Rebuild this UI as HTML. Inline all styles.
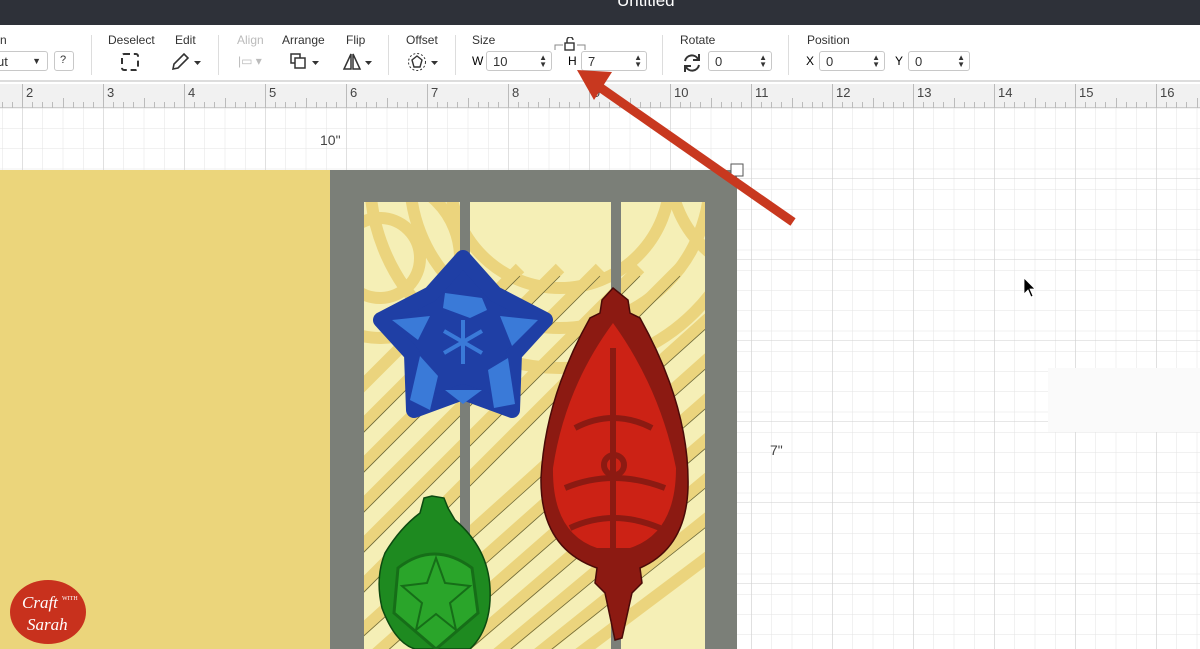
<!DOCTYPE html>
<html><head><meta charset="utf-8"><style>
*{margin:0;padding:0;box-sizing:border-box}
body{width:1200px;height:649px;overflow:hidden;position:relative;font-family:"Liberation Sans",sans-serif;background:#fff}
.abs{position:absolute}
.top{left:0;top:0;width:1200px;height:25px;background:#2e3139;color:#fff;font-size:17px}
.tb{left:0;top:25px;width:1200px;height:57px;background:#fff;border-bottom:2px solid #ddd}
.lbl{font-size:12px;color:#333;position:absolute;top:8px}
.inp{position:absolute;top:26px;height:20px;border:1px solid #c8c8c8;border-radius:3px;font-size:13px;color:#333;padding:2px 6px;background:#fff}
.sep{position:absolute;top:10px;width:1px;height:40px;background:#ddd}
.spin{position:absolute;right:4px;top:2px;font-size:8px;line-height:7px;color:#333}
.ruler{left:0;top:84px;width:1200px;height:24px;background:#f1f1f1;border-bottom:1px solid #ccc}
.rn{position:absolute;top:1px;font-size:13px;color:#444}
</style></head><body>
<div class="abs top"><span class="abs" style="left:617px;top:-9px">Untitled</span></div>
<div class="abs tb">
 <span class="lbl" style="left:0">n</span>
 <div class="inp" style="left:-10px;width:58px">ut<span style="position:absolute;right:6px;font-size:9px;top:4px">▼</span></div>
 <div class="inp" style="left:54px;width:20px;padding:2px 5px;font-size:11px">?</div>
 <div class="sep" style="left:91px"></div>
 <span class="lbl" style="left:108px">Deselect</span>
 <div class="abs" style="left:121px;top:28px;width:18px;height:18px;border:2px dashed #333;border-radius:3px"></div>
 <span class="lbl" style="left:175px">Edit</span>
 <svg class="abs" style="left:170px;top:27px" width="34" height="20"><path d="M3 17 L4 12 L14 2 L18 6 L8 16 Z" fill="none" stroke="#333" stroke-width="1.6"/><path d="M24 9h7l-3.5 4z" fill="#333"/></svg>
 <div class="sep" style="left:218px"></div>
 <span class="lbl" style="left:237px;color:#bbb">Align</span>
 <span class="abs" style="left:238px;top:29px;color:#bbb;font-size:12px">|▭ ▾</span>
 <span class="lbl" style="left:282px">Arrange</span>
 <svg class="abs" style="left:290px;top:28px" width="32" height="18"><rect x="1" y="1" width="9" height="9" fill="none" stroke="#333" stroke-width="1.5"/><rect x="5" y="5" width="10" height="10" fill="#fff" stroke="#333" stroke-width="1.5"/><path d="M22 8h7l-3.5 4z" fill="#333"/></svg>
 <span class="lbl" style="left:346px">Flip</span>
 <svg class="abs" style="left:342px;top:27px" width="32" height="20"><path d="M9 2 L2 17 H9 Z M11 2 L18 17 H11 Z" fill="none" stroke="#333" stroke-width="1.5"/><path d="M23 9h7l-3.5 4z" fill="#333"/></svg>
 <div class="sep" style="left:388px"></div>
 <span class="lbl" style="left:406px">Offset</span>
 <svg class="abs" style="left:407px;top:27px" width="34" height="20"><circle cx="10" cy="10" r="8.5" fill="none" stroke="#333" stroke-dasharray="2 2"/><path d="M10 4 L15 8 L13 15 H7 L5 8Z" fill="none" stroke="#333" stroke-width="1.4"/><path d="M24 9h7l-3.5 4z" fill="#333"/></svg>
 <div class="sep" style="left:455px"></div>
 <span class="lbl" style="left:472px">Size</span>
 <span class="abs" style="left:472px;top:29px;font-size:12px">W</span>
 <div class="inp" style="left:486px;width:66px">10<span class="spin">▲<br>▼</span></div>
 <svg class="abs" style="left:554px;top:12px" width="32" height="14"><path d="M1 13V8h8M31 13V8h-8" fill="none" stroke="#888"/><rect x="11" y="6" width="9" height="7" fill="none" stroke="#333" stroke-width="1.4"/><path d="M13 6V3a3 3 0 0 1 6 0" fill="none" stroke="#333" stroke-width="1.4"/></svg>
 <span class="abs" style="left:568px;top:29px;font-size:12px">H</span>
 <div class="inp" style="left:581px;width:66px">7<span class="spin">▲<br>▼</span></div>
 <div class="sep" style="left:662px"></div>
 <span class="lbl" style="left:680px">Rotate</span>
 <svg class="abs" style="left:681px;top:27px" width="22" height="22"><path d="M4 9a7 7 0 0 1 13-2M18 13a7 7 0 0 1-13 2" fill="none" stroke="#333" stroke-width="2"/><path d="M18 2v6h-6M4 20v-6h6" fill="none" stroke="#333" stroke-width="2"/></svg>
 <div class="inp" style="left:708px;width:64px">0<span class="spin">▲<br>▼</span></div>
 <div class="sep" style="left:788px"></div>
 <span class="lbl" style="left:807px">Position</span>
 <span class="abs" style="left:806px;top:29px;font-size:12px">X</span>
 <div class="inp" style="left:819px;width:66px">0<span class="spin">▲<br>▼</span></div>
 <span class="abs" style="left:895px;top:29px;font-size:12px">Y</span>
 <div class="inp" style="left:908px;width:62px">0<span class="spin">▲<br>▼</span></div>
</div>
<div class="abs ruler" id="ruler"></div>
<svg class="abs" style="left:0;top:108px" width="1200" height="541">
 <defs>
  <pattern id="g" x="2" y="0" width="20.25" height="20.25" patternUnits="userSpaceOnUse"><path d="M0 0H20.25M0 0V20.25" stroke="#e3e3e3" stroke-width="1"/></pattern>
  <pattern id="G" x="22" y="-11" width="81" height="81" patternUnits="userSpaceOnUse"><path d="M0 0H81M0 0V81" stroke="#cfcfcf" stroke-width="1"/></pattern>
  <clipPath id="p"><rect x="364" y="94" width="96" height="460"/><rect x="470" y="94" width="141" height="460"/><rect x="621" y="94" width="84" height="460"/></clipPath>
 </defs>
 <rect width="1200" height="541" fill="url(#g)"/>
 <rect width="1200" height="541" fill="url(#G)"/>
 <rect x="1048" y="260" width="152" height="64" fill="#fafafa"/>
 <text x="320" y="37" font-size="14" fill="#444">10"</text>
 <text x="770" y="347" font-size="14" fill="#444">7"</text>
 <rect x="0" y="62" width="331" height="479" fill="#ebd57b"/>
 <rect x="330" y="62" width="407" height="479" fill="#7b7f78"/>
 <rect x="731" y="56" width="12" height="12" fill="#fff" stroke="#555"/>
 <g clip-path="url(#p)">
  <rect x="360" y="90" width="350" height="460" fill="#f5efb6"/>
  <g fill="none" stroke="#ebd47d" stroke-width="12">
   <circle cx="560" cy="70" r="110"/><circle cx="560" cy="70" r="150"/><circle cx="560" cy="70" r="190"/>
   <circle cx="380" cy="150" r="40"/><circle cx="380" cy="150" r="80"/>
   <circle cx="780" cy="60" r="70"/><circle cx="780" cy="60" r="110"/>
  </g>
  <g stroke="#ebd47d" stroke-width="12">
   <path d="M300 420L560 160M300 460L600 160M300 500L640 160M300 540L680 160M320 560L720 200M360 560L720 240M400 560L720 280M440 560L720 320M480 560L720 360M520 560L720 400M560 560L720 440M300 380L520 160M300 340L480 160"/>
  </g>
  <g stroke="#6e6a3a" stroke-width="0.8">
   <path d="M300 428L560 168M300 468L600 168M300 508L640 168M300 548L680 168M328 560L720 208M368 560L720 248M408 560L720 288M448 560L720 328M488 560L720 368M528 560L720 408M300 388L520 168"/>
  </g>
 </g>
 <!-- star -->
 <path d="M463 150 L495 186 L545 212 L514 246 L512 302 L463 284 L414 302 L412 246 L381 212 L431 186 Z" fill="#1f3fa5" stroke="#1f3fa5" stroke-width="16" stroke-linejoin="round"/>
 <g fill="#3a7ad8"><path d="M445 185 L482 190 L487 202 L470 210 L443 200Z"/><path d="M392 212 L430 208 L418 232Z"/><path d="M500 208 L538 212 L512 238Z"/><path d="M420 248 L438 268 L430 302 L410 292Z"/><path d="M488 262 L508 250 L515 296 L494 300Z"/><path d="M445 282 L482 282 L463 296Z"/></g>
 <g stroke="#3a7ad8" stroke-width="4"><path d="M463 212 V256 M444 223 L482 245 M444 245 L482 223"/></g>
 <!-- red -->
 <path d="M613 180 L628 192 L630 205 L640 210 Q690 300 688 380 Q686 440 640 460 L642 475 L632 485 L622 530 L615 532 L605 485 L595 475 L597 460 Q540 440 541 370 Q545 290 590 210 L600 205 L602 192 Z" fill="#8c1a12" stroke="#4a0a08" stroke-width="1.5"/>
 <path d="M613 215 Q660 280 676 360 Q676 425 630 440 L597 440 Q552 425 553 360 Q565 280 613 215Z" fill="#cc2215"/>
 <g fill="none" stroke="#8c1a12" stroke-width="6"><path d="M575 320 Q613 300 652 320M565 380 Q613 360 665 380M570 420 Q613 400 660 420"/><circle cx="614" cy="357" r="10"/><path d="M613 240 V440"/></g>
 <!-- green -->
 <path d="M432 388 L424 390 L420 405 Q400 420 385 445 Q375 470 382 500 Q395 535 415 541 H470 Q492 520 490 480 Q488 440 455 412 L448 400 L444 390 Z" fill="#1e8a20" stroke="#0c4a10" stroke-width="1.5"/>
 <path d="M398 460 Q434 432 472 460 L478 505 L436 541 L394 505Z" fill="#2aa52a" stroke="#166e18" stroke-width="3"/>
 <path d="M436 450 L445 475 L470 478 L450 495 L456 522 L436 506 L416 522 L422 495 L402 478 L427 475Z" fill="#2aa52a" stroke="#166e18" stroke-width="2"/>
 <!-- cursor -->
 <path d="M1024 170 L1024 186 L1028 182 L1031 189 L1033 188 L1030 181 L1035 181 Z" fill="#000" stroke="#fff" stroke-width="0.8"/>
 <ellipse cx="48" cy="504" rx="38" ry="32" fill="#c8311d"/>
 <text x="22" y="500" font-family="Liberation Serif,serif" font-style="italic" font-size="17" fill="#fff">Craft</text>
 <text x="62" y="492" font-family="Liberation Serif,serif" font-size="6" fill="#fff">WITH</text>
 <text x="27" y="522" font-family="Liberation Serif,serif" font-style="italic" font-size="17" fill="#fff">Sarah</text>
</svg>
<svg class="abs" style="left:0;top:0" width="1200" height="649"><path d="M793 222 L598 86" stroke="#c8381f" stroke-width="9"/><path d="M577 70 L612 72 L594 100Z" fill="#c8381f"/></svg>
<script>
var r=document.getElementById('ruler'),h='';
for(var i=1;i<=16;i++){var x=22+(i-2)*81;h+='<div style="position:absolute;left:'+x+'px;top:0;width:1px;height:24px;background:#bbb"></div>';if(i>=2)h+='<span class="rn" style="left:'+(x+4)+'px">'+i+'</span>';for(var k=1;k<8;k++)h+='<div style="position:absolute;left:'+(x+k*10.125)+'px;top:'+(k==4?14:18)+'px;width:1px;height:'+(k==4?10:6)+'px;background:#bbb"></div>';}
r.innerHTML=h;
</script>
</body></html>
